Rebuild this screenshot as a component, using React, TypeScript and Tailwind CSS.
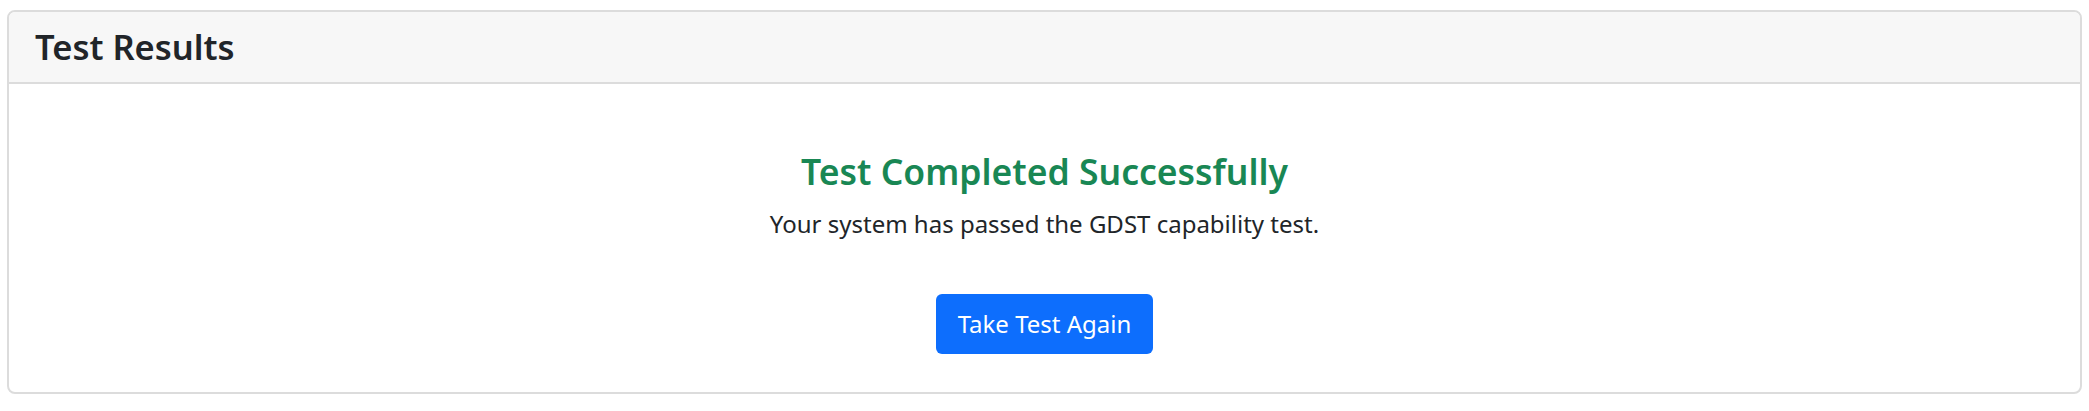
export default function App() {
  return (
    <div className="w-[2089px] h-[411px] bg-white pt-[10px] px-[7px]" style={{ fontFamily: '"Noto Sans", "Open Sans", sans-serif' }}>
      <div className="border-[2px] border-[#dcdcdc] rounded-[8px] overflow-hidden h-[384px] flex flex-col">
        <div className="h-[72px] bg-[#f7f7f7] border-b-[2px] border-[#dcdcdc] flex items-center px-[26px]">
          <h3 className="text-[34.5px] font-semibold text-[#212529] leading-none">Test Results</h3>
        </div>
        <div className="flex-1 flex flex-col items-center pt-[66px]">
          <h4 className="text-[35.5px] font-semibold text-[#198754] leading-[1.2]">Test Completed Successfully</h4>
          <p className="text-[24px] text-[#212529] mt-[13px] leading-[1.5]">Your system has passed the GDST capability test.</p>
          <button className="mt-[52px] bg-[#0d6efd] text-white text-[24px] leading-[1.5] px-[22px] py-[12px] rounded-[6px]">Take Test Again</button>
        </div>
      </div>
    </div>
  );
}
